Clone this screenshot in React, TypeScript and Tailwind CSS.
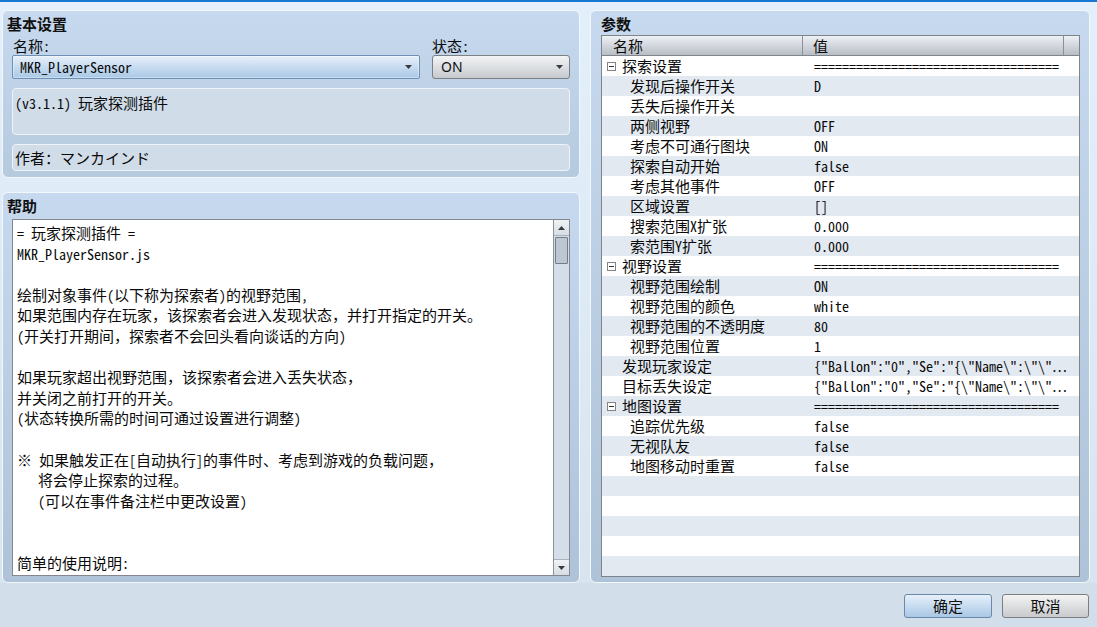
import React from "react";

const MONO =
  "font-['Noto_Sans_Mono_CJK_SC','DejaVu_Sans_Mono','Noto_Sans_CJK_SC',monospace]";
const SANS = "font-['Noto_Sans','Noto_Sans_CJK_SC',sans-serif]";

const CJK_RE = /([\u2E80-\u9FFF\uF900-\uFAFF\uFF01-\uFF60\u3000-\u303F\u30A0-\u30FF\u203B]+)/;

function T({ s }: { s: string }) {
  const parts = s.split(CJK_RE);
  return (
    <>
      {parts.map((p, i) =>
        i % 2 === 1 ? (
          <span key={i} className="text-[15px]">
            {p}
          </span>
        ) : (
          <React.Fragment key={i}>{p}</React.Fragment>
        )
      )}
    </>
  );
}

function Arrow({ up = false }: { up?: boolean }) {
  return (
    <svg width="7" height="4" viewBox="0 0 7 4">
      <path d={up ? "M0 4h7L3.5 0z" : "M0 0h7L3.5 4z"} fill="#3a3a3a" />
    </svg>
  );
}

type Row = { name: string; value: string; group?: boolean; child?: boolean };

const EQ = "===================================";
const JS1 = '{"Ballon":"0","Se":"{\\"Name\\":\\"\\"…';

const rows: Row[] = [
  { name: "探索设置", value: EQ, group: true },
  { name: "发现后操作开关", value: "D", child: true },
  { name: "丢失后操作开关", value: "", child: true },
  { name: "两侧视野", value: "OFF", child: true },
  { name: "考虑不可通行图块", value: "ON", child: true },
  { name: "探索自动开始", value: "false", child: true },
  { name: "考虑其他事件", value: "OFF", child: true },
  { name: "区域设置", value: "[]", child: true },
  { name: "搜索范围X扩张", value: "0.000", child: true },
  { name: "索范围Y扩张", value: "0.000", child: true },
  { name: "视野设置", value: EQ, group: true },
  { name: "视野范围绘制", value: "ON", child: true },
  { name: "视野范围的颜色", value: "white", child: true },
  { name: "视野范围的不透明度", value: "80", child: true },
  { name: "视野范围位置", value: "1", child: true },
  { name: "发现玩家设定", value: JS1 },
  { name: "目标丢失设定", value: JS1 },
  { name: "地图设置", value: EQ, group: true },
  { name: "追踪优先级", value: "false", child: true },
  { name: "无视队友", value: "false", child: true },
  { name: "地图移动时重置", value: "false", child: true },
  { name: "", value: "" },
  { name: "", value: "" },
  { name: "", value: "" },
  { name: "", value: "" },
  { name: "", value: "" },
];

const help: string[] = [
  "= 玩家探测插件 =",
  "MKR_PlayerSensor.js",
  "",
  "绘制对象事件(以下称为探索者)的视野范围,",
  "如果范围内存在玩家，该探索者会进入发现状态，并打开指定的开关。",
  "(开关打开期间，探索者不会回头看向谈话的方向)",
  "",
  "如果玩家超出视野范围，该探索者会进入丢失状态，",
  "并关闭之前打开的开关。",
  "(状态转换所需的时间可通过设置进行调整)",
  "",
  "※ 如果触发正在[自动执行]的事件时、考虑到游戏的负载问题，",
  "   将会停止探索的过程。",
  "   (可以在事件备注栏中更改设置)",
  "",
  "",
  "简单的使用说明:",
  "",
  "",
];

function Title({ text }: { text: string }) {
  return (
    <div className="pl-[4px] pt-[3px] h-[22px] leading-[19px] text-[15px] font-bold font-['Noto_Sans_CJK_SC',sans-serif] text-[#111]">
      {text}
    </div>
  );
}

export default function App() {
  return (
    <div
      className={`w-[1097px] h-[627px] overflow-hidden flex flex-col bg-[#d2deea] text-[#0a0a0a] ${MONO} text-[14px]`}
    >
      <div className="h-[2px] bg-[#1677d2]" />
      <div className="h-[581px] flex gap-[10px] pl-[2px] pt-[8px] bg-gradient-to-b from-[#e3effb] to-[#d8e4f0]">
        {/* Left column */}
        <div className="w-[578px] flex flex-col gap-[14px]">
          {/* Basic settings */}
          <div className="h-[168px] rounded-[6px] border border-[#f2f7fc] bg-gradient-to-b from-[#c6d9ee] to-[#b6cade]">
            <Title text="基本设置" />
            <div className="pl-[9px] pr-[9px]">
              <div className="flex gap-[12px] mt-[4px]">
                <div className="w-[408px]">
                  <div className="h-[18px] leading-[18px] pl-[1px]">
                    <T s="名称:" />
                  </div>
                  <div className="h-[24px] rounded-[2px] border border-[#6f8fb4] bg-gradient-to-b from-[#e7f0fa] to-[#a9c8e6] flex items-center pl-[7px] pr-[7px] shadow-[inset_0_0_0_1px_rgba(255,255,255,0.35)]">
                    <span className="flex-1 leading-[20px]">MKR_PlayerSensor</span>
                    <Arrow />
                  </div>
                </div>
                <div className="flex-1">
                  <div className="h-[18px] leading-[18px]">
                    <T s="状态:" />
                  </div>
                  <div className="h-[24px] rounded-[3px] border border-[#7c7f83] bg-gradient-to-b from-[#f3f4f6] to-[#c6cacf] flex items-center pl-[8px] pr-[6px]">
                    <span className={`flex-1 ${SANS} text-[14px] leading-[20px] text-[#111]`}>ON</span>
                    <Arrow />
                  </div>
                </div>
              </div>
              <div className="mt-[9px] h-[47px] rounded-[4px] border border-[#edf3f9] bg-[#d0dce8] pl-[2px] pt-[5px] leading-[18px]">
                <T s="(v3.1.1) 玩家探测插件" />
              </div>
              <div className="mt-[9px] h-[27px] rounded-[4px] border border-[#edf3f9] bg-[#d0dce8] pl-[2px] flex items-center">
                <span className="leading-[18px]">
                  <T s="作者：マンカインド" />
                </span>
              </div>
            </div>
          </div>

          {/* Help */}
          <div className="h-[391px] rounded-[6px] border border-[#f2f7fc] bg-gradient-to-b from-[#c6d9ee] to-[#afc3d8]">
            <Title text="帮助" />
            <div className="ml-[9px] mr-[9px] mt-[4px] h-[357px] border border-[#828790] bg-white flex">
              <div className="flex-1 overflow-hidden pl-[4px] pt-[3px] leading-[20.6px] whitespace-pre">
                {help.map((l, i) => (
                  <div key={i} className="h-[20.6px]">
                    <T s={l} />
                  </div>
                ))}
              </div>
              <div className="w-[16px] border-l border-[#8a9199] bg-[#d4dee8] flex flex-col">
                <div className="h-[16px] border-b border-[#a9b2bb] bg-gradient-to-b from-[#f0f3f6] to-[#d6dde4] flex items-center justify-center">
                  <Arrow up />
                </div>
                <div className="mt-[1px] mx-[1px] h-[27px] rounded-[1px] border border-[#717d88] bg-[#bcc7d1]" />
                <div className="flex-1" />
                <div className="h-[16px] border-t border-[#a9b2bb] bg-gradient-to-b from-[#f0f3f6] to-[#d6dde4] flex items-center justify-center">
                  <Arrow />
                </div>
              </div>
            </div>
          </div>
        </div>

        {/* Right column: parameters */}
        <div className="w-[500px] h-[573px] rounded-[6px] border border-[#f2f7fc] bg-gradient-to-b from-[#c6d9ee] to-[#afc3d8]">
          <div className="pl-[6px]">
            <Title text="参数" />
          </div>
          <div className="ml-[10px] mr-[9px] mt-[2px] border border-[#7e8489] bg-white">
            <div className="h-[20px] flex border-b border-[#7e8489] bg-gradient-to-b from-[#eef1f6] to-[#b8bec5] leading-[19px]">
              <div className="w-[201px] border-r border-[#8a9096] pl-[11px]">
                <T s="名称" />
              </div>
              <div className="w-[261px] border-r border-[#8a9096] pl-[10px]">
                <T s="值" />
              </div>
              <div className="flex-1" />
            </div>
            {rows.map((r, i) => (
              <div
                key={i}
                className={`h-[20px] flex items-center leading-[20px] ${i % 2 === 1 ? "bg-[#e3e9f1]" : "bg-white"}`}
              >
                <div
                  className={`w-[212px] flex items-center whitespace-nowrap ${r.group ? "pl-[5px]" : r.child ? "pl-[28px]" : "pl-[20px]"}`}
                >
                  {r.group && (
                    <span className="w-[9px] h-[9px] mr-[6px] border border-[#848484] bg-white flex items-center justify-center">
                      <span className="w-[5px] h-[1px] bg-[#333]" />
                    </span>
                  )}
                  <T s={r.name} />
                </div>
                <div className="flex-1 min-w-0 pr-[20px] whitespace-nowrap overflow-hidden">
                  {r.value}
                </div>
              </div>
            ))}
          </div>
        </div>
      </div>

      {/* Bottom buttons */}
      <div className="flex-1 flex justify-end items-start gap-[10px] pt-[11px] pr-[8px]">
        <button
          className={`w-[88px] h-[24px] rounded-[3px] border border-[#6c88a8] bg-gradient-to-b from-[#e6f0fa] to-[#a9c7e5] ${SANS} text-[15px] leading-[20px] text-[#111]`}
        >
          确定
        </button>
        <button
          className={`w-[87px] h-[24px] rounded-[3px] border border-[#7c7e81] bg-gradient-to-b from-[#f4f4f4] to-[#c8cacd] ${SANS} text-[15px] leading-[20px] text-[#111]`}
        >
          取消
        </button>
      </div>
    </div>
  );
}
